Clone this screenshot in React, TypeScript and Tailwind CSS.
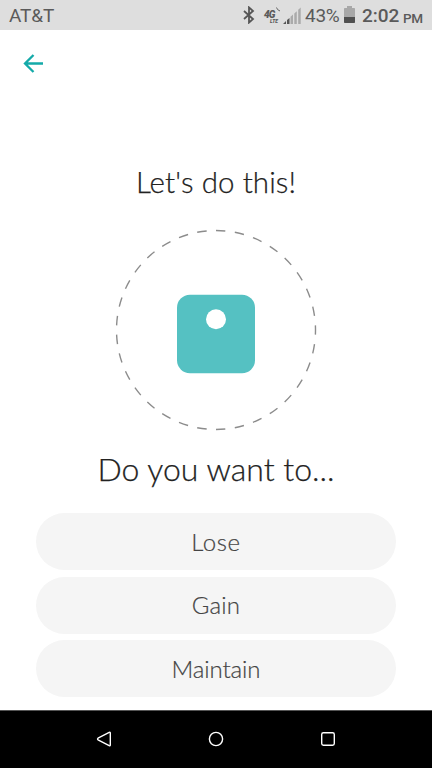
import React from "react";

const options = [
  { label: "Lose", style: "tracking-[0.6px]" },
  { label: "Gain", style: "tracking-[0.2px]" },
  { label: "Maintain", style: "tracking-[-0.1px]" },
];

function StatusBar() {
  return (
    <header className="flex h-[30px] shrink-0 items-center bg-[#dedede] pl-[9px] pr-[9px] pt-[3px] font-[Roboto,sans-serif] text-[19px] text-[#5a5a5a]">
      <span className="tracking-[-0.1px]">AT&amp;T</span>
      <svg className="mb-[4px] ml-auto" width="12" height="18" viewBox="0 0 12 18" fill="none" stroke="#555" strokeWidth="1.8">
        <path d="M1 5l9 8-4 3.600V1.400L10 5l-9 8" />
      </svg>
      <div className="relative mb-[2px] ml-[9px] flex h-[20px] w-[18px] flex-col pt-[4px] font-black italic leading-none">
        <span className="h-[9px] text-[10px] leading-[9px] tracking-[-0.8px]">4G</span>
        <span className="ml-[6px] h-[5px] text-[5px] leading-[5px]">LTE</span>
        <svg className="absolute left-[12px] top-[1px]" width="5" height="5" viewBox="0 0 5 5">
          <path d="M.5.5q.5 2.500 3.500 3.500" stroke="#666" fill="none" />
        </svg>
      </div>
      <svg className="mb-[2px] ml-[1px]" width="18" height="18" viewBox="0 0 18 18">
        <path d="M0 17h3v-3zM4 17h2.500v-6L4 13z" fill="#555" />
        <path d="M7.500 17H10V7.500l-2.500 2.200zM11.300 17h2.500V4.200l-2.500 2.200zM15.200 17h2.500V.5l-2.500 2.200z" fill="#aaa" />
      </svg>
      <span className="ml-[4px] w-[35px] tracking-[-0.3px]">43%</span>
      <svg className="mb-[4px] ml-[4px]" width="11" height="18" viewBox="0 0 11 18">
        <path d="M3 0h5v2h2.200q.8 0 .8.8V11H0V2.800Q0 2 .8 2H3z" fill="#a8a8a8" />
        <path d="M0 11h11v5.200q0 .8-.8.8H.8q-.8 0-.8-.8z" fill="#505050" />
      </svg>
      <span className="ml-[7px] w-[37px] font-medium">2:02</span>
      <span className="ml-[4px] w-[20px] pt-[3px] text-[13.5px] font-medium tracking-[-0.4px]">PM</span>
    </header>
  );
}

function ScaleIllustration() {
  return (
    <svg className="mt-[28px] shrink-0" width="204" height="204" viewBox="0 0 204 204" fill="none">
      <circle
        cx="102" cy="102" r="99.500" stroke="#8c8c8c" strokeWidth="1.4"
        pathLength="330" strokeDasharray="5 5" strokeDashoffset="2.5"
      />
      <rect x="63" y="66.800" width="78" height="78.400" rx="13" fill="#55c1c2" />
      <circle cx="102" cy="91.300" r="10" fill="#fff" />
    </svg>
  );
}

function NavigationBar() {
  return (
    <nav className="flex h-[58px] shrink-0 items-center justify-between border-t border-[#555] bg-black px-[96px] pb-[1px]">
      <svg width="16" height="16" viewBox="0 0 16 16" fill="none" stroke="#fff" strokeWidth="1.4" strokeLinejoin="round">
        <path d="M13.200 1.300Q14.300.8 14.300 2v12q0 1.200-1.100.7L2 8.800Q1.100 8 2 7.200z" />
      </svg>
      <svg width="16" height="16" viewBox="0 0 16 16" fill="none" stroke="#fff" strokeWidth="1.4">
        <circle cx="8" cy="8" r="6.600" />
      </svg>
      <svg width="16" height="16" viewBox="0 0 16 16" fill="none" stroke="#fff" strokeWidth="1.4">
        <rect x="1.700" y="1.700" width="12.600" height="12.600" rx="1.700" />
      </svg>
    </nav>
  );
}

export default function App() {
  return (
    <div className="flex h-[768px] w-[432px] flex-col overflow-hidden bg-white font-[Lato,sans-serif]">
      <StatusBar />
      <main className="flex flex-1 flex-col items-center">
        <button aria-label="Back" className="ml-[23px] mt-[22px] self-start">
          <svg className="block" width="22" height="22" viewBox="0 0 22 22" fill="none" stroke="#14aaa9" strokeWidth="2.300">
            <path d="M20 11.500H2.500M10.500 3l-8.500 8.500 8.500 8.500" />
          </svg>
        </button>
        <h1 className="mt-[90px] h-[36px] whitespace-nowrap text-[29.5px] font-light leading-[36px] tracking-[0.1px] text-[#222] [-webkit-text-stroke:0.25px]">Let's do this!</h1>
        <ScaleIllustration />
        <h2 className="mt-[17px] h-[40px] whitespace-nowrap text-[32px] font-light leading-[40px] text-[#222] [-webkit-text-stroke:0.25px]">Do you want to...</h2>
        <div className="mt-[24px] flex w-[360px] flex-col gap-[6.500px]">
          {options.map((o) => (
            <button key={o.label} className={`flex h-[57px] items-center justify-center rounded-full bg-[#f5f5f5] text-[24px] font-light text-[#444] [-webkit-text-stroke:0.2px] ${o.style}`}>
              {o.label}
            </button>
          ))}
        </div>
      </main>
      <NavigationBar />
    </div>
  );
}
